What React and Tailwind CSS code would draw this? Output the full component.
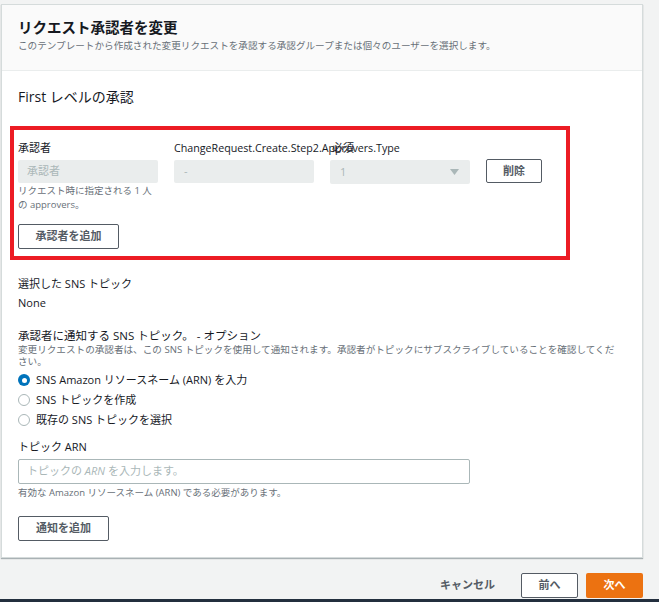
import React from "react";

const font = { fontFamily: '"Open Sans", "Noto Sans CJK JP", sans-serif' };

function Radio({ checked, children }) {
  return (
    <div className="flex items-center h-[20px]">
      {checked ? (
        <span className="w-[12px] h-[12px] rounded-full bg-[#0073bb] flex items-center justify-center">
          <span className="w-[5px] h-[5px] rounded-full bg-white"></span>
        </span>
      ) : (
        <span className="w-[12px] h-[12px] rounded-full border border-[#aab7b8] bg-white"></span>
      )}
      <span className="ml-[6px] text-[11px] leading-[16px] text-[#16191f]">{children}</span>
    </div>
  );
}

export default function App() {
  return (
    <div
      className="w-[659px] h-[602px] bg-[#f2f3f3] flex flex-col overflow-hidden"
      style={font}
    >
      <div className="ml-[1px] mt-[4px] w-[642px] bg-white border border-[#d5dbdb] shadow-[0_1px_1px_rgba(0,28,36,0.3)]">
        <div className="bg-[#fafafa] border-b border-[#eaeded] px-[16px] pt-[12px] pb-[17px]">
          <div className="text-[14.5px] leading-[22px] font-bold text-[#16191f]">
            リクエスト承認者を変更
          </div>
          <div className="text-[9.6px] leading-[14px] text-[#687078]">
            このテンプレートから作成された変更リクエストを承認する承認グループまたは個々のユーザーを選択します。
          </div>
        </div>
        <div className="px-[16px] pt-[16px] pb-[16px]">
          <div className="text-[14px] leading-[20px] text-[#16191f]">First レベルの承認</div>

          <div className="mt-[19px] ml-[-8px] w-[560px] border-[4px] border-[#ec1c24] pl-[4px] pt-[10px] pb-[7px]">
            <div className="flex items-start">
              <div className="w-[140px] flex flex-col">
                <div className="text-[11px] leading-[16px] text-[#16191f]">承認者</div>
                <div className="mt-[4px] h-[23px] bg-[#eaeded] rounded-[2px] flex items-center pl-[9px] text-[11px] text-[#aab7b8]">
                  承認者
                </div>
                <div className="mt-[1px] text-[9.5px] leading-[14px] text-[#687078]">
                  リクエスト時に指定される 1 人の approvers。
                </div>
              </div>
              <div className="w-[140px] ml-[16px] flex flex-col">
                <div className="text-[10.7px] leading-[16px] text-[#16191f] whitespace-nowrap">
                  ChangeRequest.Create.Step2.Approvers.Type
                </div>
                <div className="mt-[4px] h-[23px] bg-[#eaeded] rounded-[2px] flex items-center pl-[10px] text-[11px] text-[#aab7b8]">
                  -
                </div>
              </div>
              <div className="w-[140px] ml-[16px] flex flex-col relative">
                <div className="text-[11px] leading-[16px] text-[#16191f] pl-[2px]">必須</div>
                <div className="mt-[4px] h-[24px] bg-[#eaeded] rounded-[2px] flex items-center justify-between pl-[10px] pr-[11px] text-[11px] text-[#aab7b8]">
                  <span>1</span>
                  <svg width="9" height="6" viewBox="0 0 9 6">
                    <path d="M0 0 L9 0 L4.5 6 Z" fill="#aab7b8" />
                  </svg>
                </div>
              </div>
              <button className="ml-[16px] mt-[19px] w-[56px] h-[24px] border border-[#545b64] rounded-[2px] bg-white text-[11px] font-bold text-[#545b64] flex items-center justify-center">
                削除
              </button>
            </div>
            <button className="mt-[12px] w-[101px] h-[25px] border border-[#545b64] rounded-[2px] bg-white text-[11px] font-bold text-[#545b64] flex items-center justify-center">
              承認者を追加
            </button>
          </div>

          <div className="mt-[16px] text-[11px] leading-[16px] text-[#16191f]">選択した SNS トピック</div>
          <div className="mt-[3px] text-[11px] leading-[16px] text-[#16191f]">None</div>

          <div className="mt-[17px] text-[11.5px] leading-[16px] text-[#16191f]">
            承認者に通知する SNS トピック。 - オプション
          </div>
          <div className="text-[9.6px] leading-[12px] text-[#687078] w-[610px]">
            変更リクエストの承認者は、この SNS トピックを使用して通知されます。承認者がトピックにサブスクライブしていることを確認してくだ
            <br />
            さい。
          </div>
          <div className="mt-[2px] flex flex-col">
            <Radio checked>SNS Amazon リソースネーム (ARN) を入力</Radio>
            <Radio>SNS トピックを作成</Radio>
            <Radio>既存の SNS トピックを選択</Radio>
          </div>

          <div className="mt-[9px] text-[11px] leading-[16px] text-[#16191f]">トピック ARN</div>
          <div className="mt-[4px] w-[452px] h-[25px] border border-[#aab7b8] rounded-[2px] flex items-center pl-[8px] text-[11px] text-[#aab7b8]">
            トピックの&nbsp;<span className="italic">ARN</span>&nbsp;を入力します。
          </div>
          <div className="mt-[2px] text-[9.5px] leading-[14px] text-[#687078]">
            有効な Amazon リソースネーム (ARN) である必要があります。
          </div>
          <button className="mt-[16px] w-[91px] h-[25px] border border-[#545b64] rounded-[2px] bg-white text-[11px] font-bold text-[#545b64] flex items-center justify-center">
            通知を追加
          </button>
        </div>
      </div>

      <div className="w-[642px] ml-[1px] mt-[15px] flex items-center justify-end">
        <span className="text-[11px] font-bold text-[#545b64] mr-[26px]">キャンセル</span>
        <button className="w-[57px] h-[25px] border border-[#545b64] rounded-[2px] bg-white text-[11px] font-bold text-[#545b64] flex items-center justify-center">
          前へ
        </button>
        <button className="ml-[8px] w-[57px] h-[25px] rounded-[2px] bg-[#ec7211] text-[11px] font-bold text-white flex items-center justify-center">
          次へ
        </button>
      </div>

      <div className="mt-auto h-[3px] bg-[#232f3e]"></div>
    </div>
  );
}
